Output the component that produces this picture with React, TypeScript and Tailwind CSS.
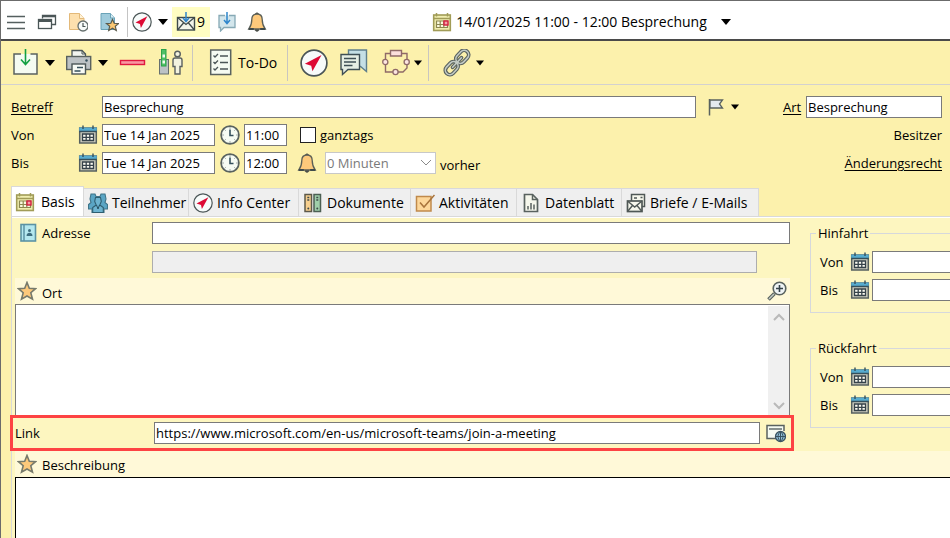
import { useState } from "react";
import type { ReactNode } from "react";

/* ---------- icons ---------- */

type IconProps = { className?: string };

function Svg({ className = "size-5", box = 20, children }: { className?: string; box?: number; children: ReactNode }) {
  return (
    <svg viewBox={`0 0 ${box} ${box}`} className={`shrink-0 ${className}`} fill="none" aria-hidden="true">
      {children}
    </svg>
  );
}

function Caret({ className = "w-2.5" }: IconProps) {
  return (
    <svg viewBox="0 0 10 6" className={`h-1.5 shrink-0 ${className}`} aria-hidden="true">
      <path d="M0 0h10L5 6z" fill="#000" />
    </svg>
  );
}

function MenuIcon() {
  return (
    <Svg>
      <path d="M1 4.500h18M1 10.500h18M1 16.500h18" stroke="#555f5f" strokeWidth="1.300" />
    </Svg>
  );
}

function WindowsIcon() {
  return (
    <Svg>
      <path d="M5.500 6.500V3.500h13v9H15" stroke="#4b5657" strokeWidth="1.300" />
      <path d="M5.500 4.500h13" stroke="#4b5657" strokeWidth="1.600" />
      <rect x="1.500" y="7.500" width="13" height="9" fill="#fff" stroke="#4b5657" strokeWidth="1.300" />
      <path d="M1.500 9h13" stroke="#4b5657" strokeWidth="2" />
    </Svg>
  );
}

function DocClockIcon() {
  return (
    <Svg>
      <path d="M1.500 1.500h10l4.500 5v11H1.500z" fill="#fde0ae" stroke="#e3b979" />
      <path d="M11.500 1.500v5H16" fill="#fff3d8" stroke="#e3b979" />
      <circle cx="15" cy="14" r="5" fill="#f7fbfa" stroke="#66706f" strokeWidth="1.300" />
      <path d="M15 11v3.500h2.500" stroke="#4b5657" strokeWidth="1.200" />
    </Svg>
  );
}

function DocStarIcon() {
  return (
    <Svg>
      <path d="M2 1.500h9.500l4 4.500v11.500H2z" fill="#9fcbdc" stroke="#6aa3b8" />
      <path d="M11.500 1.500V6h4" fill="#d9edf3" stroke="#6aa3b8" />
      <path
        d="M13.500 7.500l1.700 3.800 4.300.3-3.200 2.700 1 4.200-3.800-2.200-3.800 2.200 1-4.200-3.200-2.700 4.300-.3z"
        fill="#fbc873"
        stroke="#5a5a4c"
        strokeWidth="1.200"
      />
    </Svg>
  );
}

function CompassIcon({ className }: IconProps) {
  return (
    <Svg className={className}>
      <circle cx="10" cy="10" r="9.200" fill="#f7fbfa" stroke="#4b5657" strokeWidth="1.200" />
      <path d="M15.400 4.300L8.900 15.900 8 12 3.500 10.500z" fill="#dd0a34" />
    </Svg>
  );
}

function InboxMailIcon() {
  return (
    <Svg>
      <rect x="1.500" y="5.500" width="17" height="12.500" fill="#f3f5ea" stroke="#3f4a4b" strokeWidth="1.400" />
      <path d="M1.500 5.500l8.500 7 8.500-7M1.500 18l6-7M18.500 18l-6-7" stroke="#3f4a4b" strokeWidth="1.300" />
      <path d="M10 0v9M7 6l3 3.500L13 6" stroke="#2f86cc" strokeWidth="1.500" />
    </Svg>
  );
}

function InboxChatIcon() {
  return (
    <Svg>
      <path d="M8 3.500H2v12h1.500v3.500L7 15.500h11v-12h-6" fill="#d3e6ec" stroke="#86a9b5" strokeWidth="1.300" />
      <path d="M10 0v11M7 8l3 3.500L13 8" stroke="#2f86cc" strokeWidth="1.500" />
    </Svg>
  );
}

function BellIcon() {
  return (
    <Svg>
      <path d="M8.300 2.500c0-2 3.400-2 3.400 0M8 17.500c0 2.300 4 2.300 4 0z" fill="#4b4f4a" stroke="#4b4f4a" />
      <path
        d="M10 2C6.500 2 4.800 4.300 4.800 7.500c0 4.500-.8 6.500-3 9.500h16.400c-2.200-3-3-5-3-9.500C15.200 4.300 13.500 2 10 2z"
        fill="#fdc97b"
        stroke="#5b5f56"
        strokeWidth="1.300"
      />
      <path d="M1.800 17h5M13.200 17h5" stroke="#3f4a4b" strokeWidth="1.800" />
    </Svg>
  );
}

function EventIcon() {
  return (
    <Svg>
      <rect x="1.700" y="3" width="16.600" height="15.500" fill="#f1eeb0" stroke="#a19c57" strokeWidth="1.600" />
      <path d="M1.500 6.500h17M4.500 1v3.500M15.500 1v3.500" stroke="#a19c57" strokeWidth="1.500" />
      <path d="M4.500 9h11v6.500h-11zM4.500 12.500h11M8.200 9v6.500M11.800 9v6.500" fill="#fbfbe0" stroke="#8d8850" strokeWidth="1.200" />
      <rect x="12" y="9" width="4" height="4" fill="#f3a0a6" stroke="#d31d40" strokeWidth="1.400" />
    </Svg>
  );
}

function CalendarIcon() {
  return (
    <Svg>
      <rect x="1.700" y="3" width="16.600" height="15" fill="#cfcfc0" stroke="#56605f" strokeWidth="1.500" />
      <path d="M1.200 2.500h17.600v4H1.200z" fill="#56abcf" />
      <path d="M1.200 6.500h17.600M5 .5V4M15 .5V4" stroke="#35505c" strokeWidth="1.400" />
      <path d="M4.500 9h11v6.500h-11zM4.500 12.300h11M8.200 9v6.500M11.800 9v6.500" fill="#fafaf0" stroke="#35424a" strokeWidth="1.300" />
    </Svg>
  );
}

function ClockIcon() {
  return (
    <Svg>
      <circle cx="10" cy="10" r="8.900" fill="#f6fbf3" stroke="#59625f" strokeWidth="1.700" />
      <path d="M10 4.500v6h3.500" stroke="#35505c" strokeWidth="1.600" />
      <path d="M10 2.500v1M10 16.500v1M2.500 10h1M16.500 10h1M4.700 4.700l.7.7M14.600 14.600l.7.7M15.300 4.700l-.7.7M4.700 15.300l.7-.7" stroke="#4b5657" />
    </Svg>
  );
}

function ImportIcon() {
  return (
    <Svg className="size-7" box={28}>
      <path d="M9 5H2v20h23V5h-6.500" fill="#f5fbf2" stroke="#59625f" strokeWidth="1.500" />
      <path d="M13.500 0v15.500M9 10.500l4.500 5 4.500-5" stroke="#12a043" strokeWidth="1.600" />
    </Svg>
  );
}

function PrinterIcon() {
  return (
    <Svg className="size-7" box={28}>
      <path d="M7 8V1.500h10l3.500 3.500v4" fill="#f2f5ef" stroke="#4b5657" strokeWidth="1.300" />
      <path d="M17 1.500V5h3.500" stroke="#4b5657" />
      <rect x="1.700" y="7.500" width="24" height="13" fill="#bcc2c5" stroke="#59625f" strokeWidth="1.400" />
      <circle cx="21.500" cy="11.500" r="1.200" fill="#35505c" />
      <rect x="7" y="15" width="13.500" height="10" fill="#f7faf5" stroke="#4b5657" strokeWidth="1.400" />
      <path d="M12 18.500h6M9.500 22h6" stroke="#35505c" strokeWidth="1.500" />
    </Svg>
  );
}

function MinusIcon() {
  return (
    <Svg className="size-7" box={28}>
      <rect x="2.500" y="11.500" width="24" height="4" fill="#f898a2" stroke="#e0193f" strokeWidth="1.400" />
    </Svg>
  );
}

function PresenceIcon() {
  return (
    <Svg className="size-7" box={28}>
      <rect x="2.500" y="10.500" width="9" height="14.500" fill="#bcc2c5" stroke="#66706f" />
      <rect x="4.500" y=".5" width="4.500" height="16.500" fill="#4fbf66" stroke="#2ba24a" />
      <path d="M5.500 5.500h2.500v3H5.500zM5.500 11.500h2.500v3H5.500z" fill="#f5fbf2" />
      <circle cx="20.500" cy="5" r="2.800" fill="#f2f2df" stroke="#5a6060" strokeWidth="1.400" />
      <path d="M18 9h5c1.300 0 2 .8 2 2v6.500h-2V25h-5v-7.500h-2V11c0-1.200.7-2 2-2z" fill="#f2f2df" stroke="#5a6060" strokeWidth="1.400" />
    </Svg>
  );
}

function ChecklistIcon() {
  return (
    <Svg className="size-7" box={28}>
      <rect x="3.700" y="1" width="20" height="24.500" fill="#f5fbf2" stroke="#59625f" strokeWidth="1.500" />
      <path
        d="M6.500 6.500L8 8l3-3M6.500 13L8 14.500l3-3M6.500 19.500L8 21l3-3M13 7h8M13 13.500h8M13 20h8"
        stroke="#4b5657"
        strokeWidth="1.300"
      />
    </Svg>
  );
}

function ChatIcon() {
  return (
    <Svg className="size-7" box={28}>
      <path d="M8.500 1h18v21.500l-6-5h-12z" fill="#c5dfe5" stroke="#5f7f8c" strokeWidth="1.400" />
      <path d="M1 5.500h18.500v15H8l-5.500 5v-5H1z" fill="#e6eee4" stroke="#3f4f55" strokeWidth="1.400" />
      <path d="M4 9.500h12M4 13h12M4 16.500h8.500" stroke="#3f4f55" strokeWidth="1.300" />
    </Svg>
  );
}

function ProcessIcon() {
  return (
    <Svg className="size-7" box={28}>
      <path d="M9 4.500H3.500V23H21l4-4V4.500h-6" stroke="#8f6a68" strokeWidth="1.400" />
      <path d="M8.500 1.500h11V7h-11z" fill="#fbdfdc" stroke="#8f6a68" strokeWidth="1.400" />
      <circle cx="3.300" cy="13" r="2.600" fill="#fde6e2" stroke="#8f6a68" strokeWidth="1.300" />
      <circle cx="24.700" cy="13" r="2.600" fill="#fde6e2" stroke="#8f6a68" strokeWidth="1.300" />
      <circle cx="13.500" cy="23" r="2.600" fill="#fde6e2" stroke="#8f6a68" strokeWidth="1.300" />
    </Svg>
  );
}

function LinkIcon() {
  const links = (
    <>
      <rect x="-4.500" y="-15" width="9" height="14.500" rx="4.500" />
      <rect x="-4.500" y=".5" width="9" height="14.500" rx="4.500" />
      <path d="M0-6.500v13" />
    </>
  );
  return (
    <Svg className="size-7" box={28}>
      <g transform="translate(14 13.500) rotate(43)" stroke="#59625f" strokeWidth="3.800" strokeLinecap="round">
        {links}
      </g>
      <g transform="translate(14 13.500) rotate(43)" stroke="#c3cbc4" strokeWidth="1.600" strokeLinecap="round">
        {links}
      </g>
    </Svg>
  );
}

function FlagIcon() {
  return (
    <Svg>
      <path d="M2.500 2v16.500" stroke="#59625f" strokeWidth="1.500" />
      <path d="M3 3h12.500L12.500 7l3 4H3z" fill="#e4e9ee" stroke="#59625f" strokeWidth="1.300" />
    </Svg>
  );
}

function PeopleIcon() {
  return (
    <Svg>
      <path
        d="M3 1h4l1 2.500h4L13 1h4l1 5-1 3.500 2.500 2V16H16v3.500H4V16H.5v-4.500l2.500-2L2 6z"
        fill="#5aa5c4"
        stroke="#3f7488"
        strokeWidth="1.100"
      />
      <path d="M7.500 4.500h5l.8 4-1.500 3.500 3.500 2.500v5H4.700v-5l3.500-2.500L6.700 8.500z" fill="#6db4d0" stroke="#2f5e70" strokeWidth="1.100" />
      <path d="M8.500 12l1.500 4 1.500-4" stroke="#244f61" />
    </Svg>
  );
}

function BindersIcon() {
  return (
    <Svg>
      <rect x="2" y="1.500" width="6.500" height="17" fill="#f6cf8e" stroke="#5c594a" strokeWidth="1.500" />
      <rect x="11" y="1.500" width="6.500" height="17" fill="#9fcfaa" stroke="#4c5f53" strokeWidth="1.500" />
      <path d="M4.300 4.500h2M4.300 7h2M13.300 4.500h2M13.300 7h2" stroke="#3f4a4b" strokeWidth="1.300" />
      <circle cx="5.300" cy="15.500" r="1" fill="#3f4a4b" />
      <circle cx="14.300" cy="15.500" r="1" fill="#3f4a4b" />
    </Svg>
  );
}

function TaskIcon() {
  return (
    <Svg>
      <rect x="1.500" y="3.500" width="14.500" height="14.500" fill="#fdd79a" stroke="#c08a4c" strokeWidth="1.500" />
      <path d="M5 9.500l4 4.500L19.500 2" stroke="#a9743c" strokeWidth="1.500" />
    </Svg>
  );
}

function DataSheetIcon() {
  return (
    <Svg>
      <path d="M3.500 1.500h8l5 5v12h-13z" fill="#f6f7ec" stroke="#59625f" strokeWidth="1.700" />
      <path d="M11.500 1.500v5h5M7 16.500V13M10 16.500V10M13 16.500v-5" stroke="#59625f" strokeWidth="1.500" />
    </Svg>
  );
}

function LettersIcon() {
  return (
    <Svg>
      <path d="M5.500 8V1.500h13v12H16" fill="#f6f7ec" stroke="#4f5856" strokeWidth="1.500" />
      <path d="M8 5h3M14.500 4.500h2" stroke="#4f5856" strokeWidth="1.600" />
      <rect x="1.500" y="8" width="14.500" height="10.500" fill="#f6f7ec" stroke="#4f5856" strokeWidth="1.700" />
      <path d="M1.500 8l7.200 6L16 8M1.500 18.500l5-6M16 18.500l-5-6" stroke="#4f5856" strokeWidth="1.400" />
    </Svg>
  );
}

function AddressBookIcon() {
  return (
    <Svg>
      <rect x="3" y="1.500" width="14.500" height="16.500" fill="#b4e8ef" stroke="#5b93a4" strokeWidth="1.600" />
      <path d="M6 1.500V18" stroke="#5b93a4" strokeWidth="1.500" />
      <circle cx="11.500" cy="7.500" r="1.500" fill="#3d6e80" />
      <path d="M8.500 13c0-4.300 6-4.300 6 0z" fill="#3d6e80" />
    </Svg>
  );
}

function StarIcon() {
  return (
    <Svg>
      <path
        d="M10 1.500l2.300 5.800 6.200.4-4.700 4 1.700 6.500L10 15l-5.500 3.200 1.700-6.500-4.700-4 6.200-.4z"
        fill="#fdc97b"
        stroke="#777a6c"
        strokeWidth="1.600"
      />
    </Svg>
  );
}

function ZoomInIcon() {
  return (
    <Svg>
      <path d="M1.500 18.500l6-6" stroke="#59625f" strokeWidth="3.800" />
      <path d="M2 18l5-5" stroke="#c3cbc4" strokeWidth="1.400" />
      <circle cx="12.500" cy="7.500" r="6.300" fill="#eef3f5" stroke="#59625f" strokeWidth="1.600" />
      <path d="M12.500 4v7M9 7.500h7" stroke="#35424a" strokeWidth="1.600" />
    </Svg>
  );
}

function OpenLinkIcon() {
  return (
    <Svg>
      <path d="M18 8V2.500H1v13h9" fill="#f5fbf2" stroke="#59625f" strokeWidth="1.500" />
      <path d="M3 6h13" stroke="#4b5657" strokeWidth="1.300" />
      <circle cx="14.500" cy="13.500" r="5" fill="#8fc0d8" stroke="#3a5360" strokeWidth="1.300" />
      <path d="M9.500 13.500h10M14.500 8.500v10M14.500 8.500c-3.300 3-3.300 7 0 10M14.500 8.500c3.300 3 3.300 7 0 10" stroke="#3a5360" />
    </Svg>
  );
}

function Chevron({ className = "", weight = 1 }: IconProps & { weight?: number }) {
  return (
    <svg viewBox="0 0 12 8" className={`h-2 w-3 ${className}`} fill="none" aria-hidden="true">
      <path d="M1 1l5 5 5-5" stroke="currentColor" strokeWidth={weight} />
    </svg>
  );
}

/* ---------- building blocks ---------- */

const field = "h-[22px] min-w-0 border border-[#7a7a7a] bg-white pl-px text-[13px] text-black outline-none";

function IconButton({ label, children, className = "" }: { label: string; children: ReactNode; className?: string }) {
  return (
    <button type="button" aria-label={label} className={`flex shrink-0 items-center ${className}`}>
      {children}
    </button>
  );
}

function TitleBar() {
  return (
    <header className="flex h-[38px] items-center bg-white pt-1 pl-[5px]">
      <div className="flex items-center gap-[11px]">
        <IconButton label="Menü"><MenuIcon /></IconButton>
        <IconButton label="Fenster"><WindowsIcon /></IconButton>
        <IconButton label="Verlauf"><DocClockIcon /></IconButton>
        <IconButton label="Favoriten"><DocStarIcon /></IconButton>
      </div>
      <span className="ml-2 h-[30px] w-px bg-[#c4c4c4]" />
      <IconButton label="Info Center" className="ml-1 gap-1.5">
        <CompassIcon />
        <Caret />
      </IconButton>
      <IconButton label="Posteingang, 9 neu" className="ml-1 h-[30px] w-[38px] gap-px bg-[#fffdc2] pl-1 text-sm">
        <InboxMailIcon />
        <span>9</span>
      </IconButton>
      <IconButton label="Nachrichten" className="ml-[7px]"><InboxChatIcon /></IconButton>
      <IconButton label="Erinnerungen" className="ml-2.5"><BellIcon /></IconButton>
      <div className="flex flex-1 justify-center pr-[54px]">
        <button type="button" className="flex items-center text-sm whitespace-nowrap">
          <EventIcon />
          <span className="mr-3.5 ml-1">14/01/2025 11:00 - 12:00 Besprechung</span>
          <Caret />
        </button>
      </div>
    </header>
  );
}

function Divider({ className = "" }: IconProps) {
  return <span className={`h-9 w-px bg-[#c9c6c0] ${className}`} />;
}

function Toolbar() {
  return (
    <div className="flex h-11 items-center border-b border-[#d3d1d0] pl-[11px]">
      <IconButton label="Speichern" className="gap-[5px]"><ImportIcon /><Caret /></IconButton>
      <IconButton label="Drucken" className="ml-2.5 gap-[5px]"><PrinterIcon /><Caret /></IconButton>
      <IconButton label="Löschen" className="ml-2.5"><MinusIcon /></IconButton>
      <IconButton label="Anwesenheit" className="ml-[11px]"><PresenceIcon /></IconButton>
      <Divider className="ml-[7px]" />
      <button type="button" className="ml-[14px] flex items-center gap-[3px] text-sm">
        <ChecklistIcon />
        To-Do
      </button>
      <Divider className="ml-2.5" />
      <IconButton label="Info Center" className="ml-3"><CompassIcon className="size-7" /></IconButton>
      <IconButton label="Chat" className="ml-3"><ChatIcon /></IconButton>
      <IconButton label="Prozess" className="ml-[14px] gap-1"><ProcessIcon /><Caret className="w-2" /></IconButton>
      <Divider className="ml-1.5" />
      <IconButton label="Verknüpfung" className="ml-[14px] gap-[5px]"><LinkIcon /><Caret className="w-2" /></IconButton>
    </div>
  );
}

function DateTimeFields({ name, time }: { name: string; time: string }) {
  const id = name.toLowerCase();
  return (
    <>
      <label htmlFor={id} className="w-[67px]">{name}</label>
      <IconButton label={`${name}: Kalender`}><CalendarIcon /></IconButton>
      <input id={id} className={`ml-1 w-[113px] ${field}`} defaultValue="Tue 14 Jan 2025" />
      <IconButton label={`${name}: Uhrzeit wählen`} className="ml-[5px]"><ClockIcon /></IconButton>
      <input aria-label={`${name}: Uhrzeit`} className={`ml-1 w-[43px] ${field}`} defaultValue={time} />
    </>
  );
}

function EventForm() {
  return (
    <div className="flex flex-col gap-1.5 pt-[11px] pr-2 pb-3 pl-2.5">
      <div className="flex h-[22px] items-center">
        <label htmlFor="betreff" className="w-[91px] underline underline-offset-2">Betreff</label>
        <input id="betreff" className={`flex-1 ${field}`} defaultValue="Besprechung" />
        <IconButton label="Kennzeichnung" className="ml-[11px] gap-1"><FlagIcon /><Caret className="w-2" /></IconButton>
        <label htmlFor="art" className="ml-11 w-[23px] underline underline-offset-2">Art</label>
        <input id="art" className={`w-[136px] ${field}`} defaultValue="Besprechung" />
      </div>

      <div className="flex h-[22px] items-center">
        <DateTimeFields name="Von" time="11:00" />
        <label className="ml-[13px] flex items-center gap-1">
          <input type="checkbox" className="size-4 appearance-none border border-[#222] bg-white checked:bg-[#3a6ea5]" />
          ganztags
        </label>
        <span className="ml-auto">Besitzer</span>
      </div>

      <div className="flex h-[22px] items-center">
        <DateTimeFields name="Bis" time="12:00" />
        <span className="ml-2.5"><BellIcon /></span>
        <div className="relative ml-2 h-[22px] w-[111px]">
          <select
            id="erinnerung"
            disabled
            className="h-full w-full appearance-none border border-[#c8c8c8] bg-white pl-px text-[13px] text-[#7a7a7a] opacity-100"
          >
            <option>0 Minuten</option>
          </select>
          <Chevron className="pointer-events-none absolute top-[7px] right-1 text-[#8a8a8a]" />
        </div>
        <label htmlFor="erinnerung" className="ml-1 pt-1">vorher</label>
        <a href="#rechte" className="ml-auto underline underline-offset-2">Änderungsrecht</a>
      </div>
    </div>
  );
}

const tabs = [
  { name: "Basis", icon: <EventIcon />, width: "w-[73px]" },
  { name: "Teilnehmer", icon: <PeopleIcon />, width: "w-[105px]" },
  { name: "Info Center", icon: <CompassIcon />, width: "w-[110px]" },
  { name: "Dokumente", icon: <BindersIcon />, width: "w-[112px]" },
  { name: "Aktivitäten", icon: <TaskIcon />, width: "w-[106px]" },
  { name: "Datenblatt", icon: <DataSheetIcon />, width: "w-[105px]" },
  { name: "Briefe / E-Mails", icon: <LettersIcon />, width: "w-[137px]" },
];

function TabBar() {
  const [active, setActive] = useState("Basis");
  return (
    <div role="tablist" className="flex items-end pl-2.5">
      {tabs.map((tab) => (
        <button
          key={tab.name}
          type="button"
          role="tab"
          aria-selected={active === tab.name}
          onClick={() => setActive(tab.name)}
          className={`flex shrink-0 items-center border-t border-r border-[#d9d9d9] text-sm whitespace-nowrap ${tab.width} ${
            active === tab.name ? "h-[30px] gap-1.5 border-l bg-white pl-[3px]" : "h-7 gap-1 bg-[#efefef] pl-1 first-of-type:border-l"
          } ${tab.name === "Teilnehmer" ? "pl-0.5" : ""}`}
        >
          {tab.icon}
          {tab.name}
        </button>
      ))}
    </div>
  );
}

function TripFields({ title, id }: { title: string; id: string }) {
  return (
    <fieldset className="min-w-0 border border-r-0 border-[#d6d8dc] pb-[11px] pl-[9px]">
      <legend className="-ml-1 px-0.5 leading-5">{title}</legend>
      <div className="flex flex-col gap-1.5 pt-2">
        {["Von", "Bis"].map((name) => (
          <div key={name} className="flex h-[22px] items-center">
            <label htmlFor={`${id}-${name}`} className="w-[30px]">{name}</label>
            <IconButton label={`${title} ${name}: Kalender`}><CalendarIcon /></IconButton>
            <input id={`${id}-${name}`} className={`ml-0.5 flex-1 border-r-0 ${field}`} />
          </div>
        ))}
      </div>
    </fieldset>
  );
}

function BasisPanel() {
  return (
    <div className="ml-2.5 flex flex-1 flex-col border-t border-l border-[#d9d9d9] bg-[#fdf6c0]">
      <div className="flex gap-5 border-t border-white pt-1 pl-[3px]">
        <div className="flex min-w-0 flex-1 flex-col">
          <div className="flex h-[22px] items-center pl-[3px]">
            <AddressBookIcon />
            <label htmlFor="adresse" className="ml-1 w-[110px]">Adresse</label>
            <input id="adresse" className={`flex-1 ${field}`} />
          </div>
          <input
            aria-label="Adresse Details"
            disabled
            className="mt-[7px] mr-[33px] ml-[137px] h-[22px] min-w-0 border border-[#adadad] bg-[#efefef]"
          />

          {/* Ort */}
          <div className="mt-[5px] flex h-[26px] items-center bg-[#fff9d8] pr-[3px] pl-0.5">
            <StarIcon />
            <label htmlFor="ort" className="ml-[5px] flex-1 pt-1">Ort</label>
            <IconButton label="Ort suchen"><ZoomInIcon /></IconButton>
          </div>
          <div className="flex h-[111px] border border-b-0 border-[#7a7a7a] bg-white">
            <textarea id="ort" className="min-w-0 flex-1 resize-none p-0.5 outline-none" />
            <div className="mt-px flex w-[21px] flex-col items-center justify-between bg-[#f0f0f0] pt-[7px] pb-[5px] text-[#b9b9b9]">
              <Chevron className="rotate-180" weight={2} />
              <Chevron weight={2} />
            </div>
          </div>

          {/* Link */}
          <div className="-mr-1 -ml-[5px] flex h-9 items-center border-3 border-[#fd4343] pr-[5px] pl-0.5">
            <label htmlFor="link" className="w-[139px]">Link</label>
            <input
              id="link"
              className={`flex-1 ${field}`}
              defaultValue="https://www.microsoft.com/en-us/microsoft-teams/join-a-meeting"
            />
            <IconButton label="Link öffnen" className="ml-1.5"><OpenLinkIcon /></IconButton>
          </div>
        </div>

        <div className="flex w-[140px] flex-col gap-[25px] pt-px">
          <TripFields title="Hinfahrt" id="hin" />
          <TripFields title="Rückfahrt" id="rueck" />
        </div>
      </div>

      {/* Beschreibung */}
      <div className="ml-[3px] flex flex-1 flex-col">
        <div className="flex h-[26px] items-center bg-[#fff9d8] pl-0.5">
          <StarIcon />
          <label htmlFor="beschreibung" className="ml-[5px] pt-0.5">Beschreibung</label>
        </div>
        <textarea
          id="beschreibung"
          className="min-h-[60px] flex-1 resize-none border-t border-l border-black bg-white p-0.5 outline-none"
        />
      </div>
    </div>
  );
}

export default function App() {
  return (
    <div className="flex min-h-screen flex-col border-t border-l border-[#6b6b6b] bg-[#fcf1ac] font-['Open_Sans',sans-serif] text-[13px] leading-5 text-black">
      <TitleBar />
      <div className="h-0.5 bg-[#4a4a4a]" />
      <Toolbar />
      <EventForm />
      <TabBar />
      <BasisPanel />
    </div>
  );
}
